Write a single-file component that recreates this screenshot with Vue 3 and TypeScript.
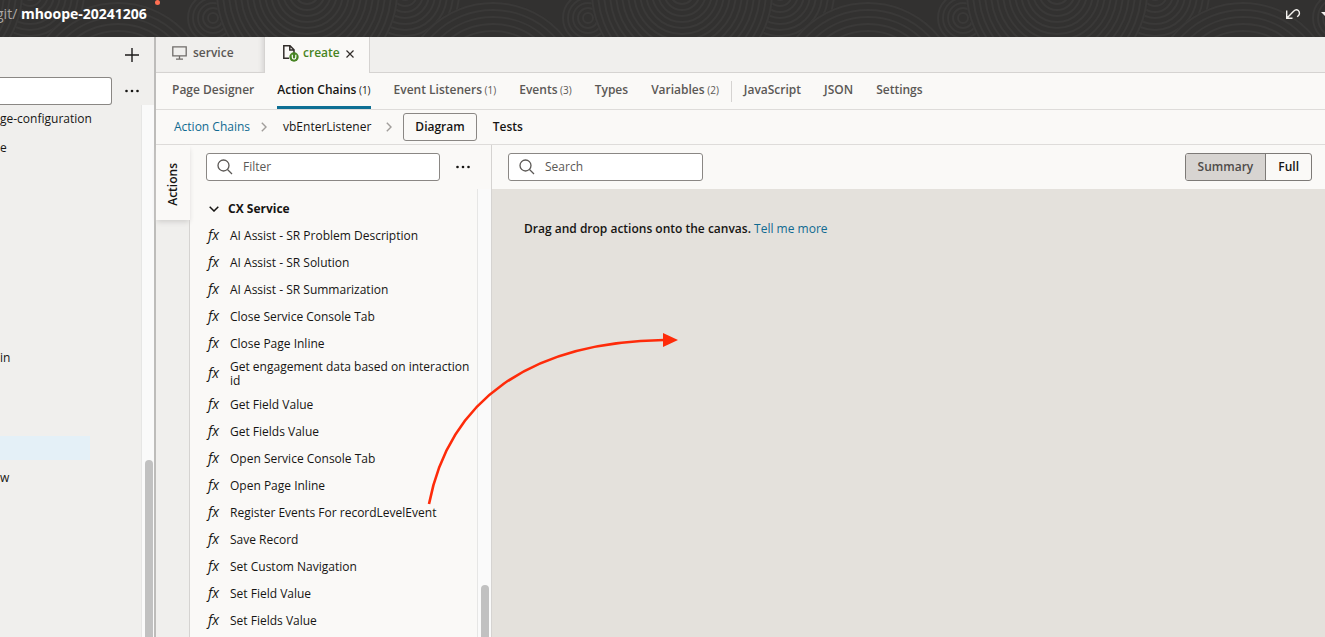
<script setup lang="ts">
import { ref } from 'vue'

interface SectionTab {
  label: string
  count?: number
}

const designTabs: SectionTab[] = [
  { label: 'Page Designer' },
  { label: 'Action Chains', count: 1 },
  { label: 'Event Listeners', count: 1 },
  { label: 'Events', count: 3 },
  { label: 'Types' },
  { label: 'Variables', count: 2 },
]
const sourceTabs: SectionTab[] = [{ label: 'JavaScript' }, { label: 'JSON' }, { label: 'Settings' }]
const activeTab = ref('Action Chains')

const actions: string[] = [
  'AI Assist - SR Problem Description',
  'AI Assist - SR Solution',
  'AI Assist - SR Summarization',
  'Close Service Console Tab',
  'Close Page Inline',
  'Get engagement data based on interaction id',
  'Get Field Value',
  'Get Fields Value',
  'Open Service Console Tab',
  'Open Page Inline',
  'Register Events For recordLevelEvent',
  'Save Record',
  'Set Custom Navigation',
  'Set Field Value',
  'Set Fields Value',
]

const treeRows: string[] = ['ge-configuration', 'e', '', '', '', '', '', '', 'in', '', '', '', 'w']
const selectedRow = 11

const filter = ref('')
const search = ref('')
const treeFilter = ref('')
const view = ref<'summary' | 'full'>('summary')

const rings = (count: number, step: number): number[] =>
  Array.from({ length: count }, (_, i) => (i + 1) * step)
const tiles: number[] = [-375, 0, 375, 750, 1125, 1500]
</script>

<template>
  <div class="app">
    <header class="topbar">
      <svg class="texture" aria-hidden="true">
        <g v-for="x in tiles" :key="x" :transform="`translate(${x} 0)`">
          <circle v-for="r in rings(9, 6)" :key="'a' + r" cx="405" cy="-6" :r="r" />
          <circle v-for="r in rings(5, 5)" :key="'b' + r" cx="213" cy="18" :r="r" />
          <circle class="mask" cx="118" cy="94" r="92" />
          <circle v-for="r in rings(13, 7)" :key="'c' + r" cx="118" cy="94" :r="r" />
          <circle class="mask" cx="307" cy="-8" r="91" />
          <circle v-for="r in rings(15, 6)" :key="'d' + r" cx="307" cy="-8" :r="r" />
        </g>
      </svg>
      <div class="branch"><span class="repo">git/</span> <strong>mhoope-20241206</strong></div>
      <i class="dot"></i>
      <div class="history">
        <button class="plain" aria-label="Undo">
          <svg width="16" height="12" viewBox="0 0 16 12" fill="none" stroke="#f3f1ee" stroke-width="1.4">
            <path d="M1.7 2.5v7.8h5.800M2 10l6.600-6.800c1.400-1.400 3.300-1.900 4.700-.6 1.600 1.500 1.500 3.900 0 5.200l-1.100 1" />
          </svg>
        </button>
        <button class="plain caret" aria-label="Undo history">
          <svg width="8" height="5" viewBox="0 0 8 5"><path d="M0 0h8L4 4z" fill="#f3f1ee" /></svg>
        </button>
      </div>
    </header>

    <div class="body">
      <aside class="navigator">
        <div class="nav-tools">
          <button class="plain" aria-label="Add">
            <svg width="14" height="14" viewBox="0 0 14 14" stroke="#1c1b1a" stroke-width="1.4"><path d="M7 0v14M0 7h14" /></svg>
          </button>
        </div>
        <div class="nav-filter">
          <input v-model="treeFilter" type="text" aria-label="Filter files" />
          <button class="plain" aria-label="More file options">
            <svg width="14" height="4" viewBox="0 0 14 4" fill="#161513"><circle cx="1.500" cy="2" r="1.300" /><circle cx="7" cy="2" r="1.300" /><circle cx="12.500" cy="2" r="1.300" /></svg>
          </button>
        </div>
        <div class="scroller">
          <ul class="tree">
            <li v-for="(row, i) in treeRows" :key="i"><span :class="{ selected: i === selectedRow }">{{ row }}</span></li>
          </ul>
          <div class="track nav-track"><div class="thumb nav-thumb"></div></div>
        </div>
      </aside>

      <main class="editor">
        <nav class="files" aria-label="Open files">
          <a class="file" href="#service">
            <svg width="15" height="14" viewBox="0 0 15 14" fill="none" stroke="#6f6c69" stroke-width="1.300"><path d="M.8.8h13.400v9H.8zM7.500 10v3M4 13.200h7" /></svg>
            service
          </a>
          <div class="file current">
            <svg width="17" height="18" viewBox="0 0 17 18">
              <path d="M7 14.300H1.800V1.800H8l4 4V9M7.800 1.800v4.300H12" fill="none" stroke="#312d2a" stroke-width="1.500" />
              <circle cx="12" cy="13" r="4.700" fill="#478423" />
              <path d="M10.300 10.800v2.500c0 2.500 3.500 2.500 3.500 0v-2.500" fill="none" stroke="#fff" stroke-width="1.200" />
            </svg>
            <a href="#create">create</a>
            <button class="plain" aria-label="Close create">
              <svg width="8" height="8" viewBox="0 0 8 8" stroke="#312d2a" stroke-width="1.200"><path d="M.5.500l7 7M7.500.500l-7 7" /></svg>
            </button>
          </div>
        </nav>

        <nav class="sections" aria-label="Page sections">
          <button v-for="tab in designTabs" :key="tab.label" :class="{ active: tab.label === activeTab }" @click="activeTab = tab.label">
            {{ tab.label }}<small v-if="tab.count"> ({{ tab.count }})</small>
          </button>
          <i class="divider"></i>
          <button v-for="tab in sourceTabs" :key="tab.label" :class="{ active: tab.label === activeTab }" @click="activeTab = tab.label">{{ tab.label }}</button>
        </nav>

        <div class="crumbs">
          <a href="#chains">Action Chains</a>
          <svg width="6" height="10" viewBox="0 0 6 10"><path d="M.8.8L5 5 .8 9.200" /></svg>
          <span class="chain">vbEnterListener</span>
          <svg width="6" height="10" viewBox="0 0 6 10"><path d="M.8.8L5 5 .8 9.200" /></svg>
          <button class="mode on">Diagram</button>
          <button class="mode">Tests</button>
        </div>

        <div class="workspace">
          <div class="rail"><button class="rail-tab"><span>Actions</span></button></div>

          <section class="palette">
            <div class="tools">
              <label class="field">
                <svg width="16" height="16" viewBox="0 0 16 16"><circle cx="6.500" cy="6.500" r="5.500" /><path d="M10.500 10.500l4.500 4.500" /></svg>
                <input v-model="filter" type="text" placeholder="Filter" aria-label="Filter actions" />
              </label>
              <button class="plain" aria-label="More action options">
                <svg width="14" height="4" viewBox="0 0 14 4" fill="#161513"><circle cx="1.500" cy="2" r="1.300" /><circle cx="7" cy="2" r="1.300" /><circle cx="12.500" cy="2" r="1.300" /></svg>
              </button>
            </div>
            <div class="scroller">
              <div class="group">
                <button class="group-title">
                  <svg width="10" height="6" viewBox="0 0 10 6" fill="none" stroke="#161513" stroke-width="1.500"><path d="M.7.700L5 5 9.300.700" /></svg>
                  CX Service
                </button>
                <ul>
                  <li v-for="action in actions" :key="action"><em>fx</em><span>{{ action }}</span></li>
                </ul>
              </div>
              <div class="track"><div class="thumb palette-thumb"></div></div>
            </div>
          </section>

          <section class="diagram">
            <div class="tools">
              <label class="field search">
                <svg width="16" height="16" viewBox="0 0 16 16"><circle cx="6.500" cy="6.500" r="5.500" /><path d="M10.500 10.500l4.500 4.500" /></svg>
                <input v-model="search" type="text" placeholder="Search" aria-label="Search diagram" />
              </label>
              <div class="toggle">
                <button :class="{ on: view === 'summary' }" @click="view = 'summary'">Summary</button>
                <button :class="{ on: view === 'full' }" @click="view = 'full'">Full</button>
              </div>
            </div>
            <div class="canvas">
              <strong>Drag and drop actions onto the canvas.</strong> <a href="#help">Tell me more</a>
            </div>
          </section>
        </div>
      </main>
    </div>

    <svg class="arrow" width="260" height="180" viewBox="0 0 260 180" aria-hidden="true">
      <path d="M9 174C29 70 110 12 244 10" fill="none" stroke="#fe2b0a" stroke-width="2.600" />
      <path d="M243 3l15 7-15 7z" fill="#fe2b0a" />
    </svg>
  </div>
</template>

<style>
body {
  margin: 0;
}
</style>

<style scoped>
* {
  box-sizing: border-box;
}
.app {
  position: relative;
  display: flex;
  flex-direction: column;
  height: 100vh;
  overflow: hidden;
  background: #faf9f7;
  color: #161513;
  font: 12px/16px 'Open Sans', 'Noto Sans', sans-serif;
}
button,
input {
  font: inherit;
  color: inherit;
}
button {
  padding: 0;
  border: 0;
  background: none;
}
a {
  color: #0f6a91;
  text-decoration: none;
}
ul {
  margin: 0;
  padding: 0;
  list-style: none;
}
.plain {
  display: flex;
}

.topbar {
  position: relative;
  display: flex;
  flex: none;
  height: 37px;
  align-items: flex-start;
  justify-content: space-between;
  background: #323130;
  color: #fff;
  overflow: hidden;
}
.texture {
  position: absolute;
  inset: 0;
  width: 100%;
  height: 100%;
  fill: none;
  stroke: #3a3938;
  stroke-width: 2;
}
.mask {
  fill: #323130;
  stroke: none;
}
.branch {
  position: relative;
  margin-top: 6px;
  font-size: 14px;
}
.repo {
  margin-left: -4px;
  color: #aaa7a4;
}
.dot {
  position: absolute;
  left: 155px;
  top: 0;
  width: 5px;
  height: 5px;
  border-radius: 50%;
  background: #ff6f52;
}
.history {
  position: relative;
  display: flex;
  margin: 8px -4px 0 0;
  gap: 20px;
}
.caret {
  padding-top: 4px;
}

.body {
  display: flex;
  flex: 1;
  min-height: 0;
}
.navigator {
  display: flex;
  flex-direction: column;
  flex: none;
  width: 156px;
  border-right: 2px solid #bdbcba;
  background: #f0efed;
}
.nav-tools {
  display: flex;
  justify-content: flex-end;
  padding: 11px 15px 15px;
}
.nav-filter {
  display: flex;
  align-items: center;
  justify-content: space-between;
  padding-right: 15px;
}
.nav-filter input {
  width: 112px;
  height: 28px;
  border: 1px solid #8a8784;
  border-left: 0;
  border-radius: 0 3px 3px 0;
  background: #fff;
}
.scroller {
  display: flex;
  flex: 1;
  min-height: 0;
  overflow: hidden;
}
.tree {
  flex: 1;
  min-width: 0;
}
.tree li {
  display: flex;
  align-items: center;
  height: 30px;
}
.tree li:first-child {
  height: 28px;
}
.tree .selected {
  width: 90px;
  height: 24px;
  background: #e4f0f7;
}
.track {
  flex: none;
  width: 14px;
  padding-left: 3px;
  border-left: 1px solid #e6e6e5;
  background: #fafafa;
}
.nav-track {
  width: 13px;
}
.thumb {
  width: 8px;
  height: 100%;
  border-radius: 4px 4px 0 0;
  background: #c1c1c1;
}
.nav-thumb {
  margin-top: 355px;
}
.palette-thumb {
  margin-top: 396px;
}

.editor {
  display: flex;
  flex-direction: column;
  flex: 1;
  min-width: 0;
}
.files {
  display: flex;
  flex: none;
  height: 36px;
  border-bottom: 1px solid #d5d3d1;
  background: #f0efed;
}
.file {
  display: flex;
  align-items: center;
  gap: 6px;
  width: 109px;
  padding: 0 16px 4px;
  border-right: 1px solid #d5d3d1;
  color: #5b5855;
  font-weight: 600;
  box-shadow: inset -5px 0 4px -3px #d8d7d5;
}
.current {
  width: 105px;
  height: 36px;
  gap: 4px;
  padding: 0 12px 4px 17px;
  background: #faf9f7;
  box-shadow: none;
}
.current a {
  color: #478423;
  font-weight: 600;
}
.current .plain {
  margin: 2px 0 0 2px;
}
.sections {
  display: flex;
  flex: none;
  align-items: center;
  gap: 23px;
  height: 37px;
  padding: 0 16px;
  border-bottom: 1px solid #dedcda;
}
.sections button {
  height: 36px;
  border-bottom: 3px solid transparent;
  color: #5b5855;
  font-weight: 600;
  white-space: nowrap;
}
.sections .active {
  border-color: #0d6f94;
  color: #161513;
}
.sections small {
  font-size: 10px;
  font-weight: 400;
}
.divider {
  width: 1px;
  height: 21px;
  margin: 0 -11px;
  background: #d5d3d1;
}
.crumbs {
  display: flex;
  flex: none;
  align-items: center;
  height: 35px;
  padding: 0 18px;
  border-bottom: 1px solid #dedcda;
}
.crumbs svg {
  margin: 0 11px;
  fill: none;
  stroke: #a19e9b;
  stroke-width: 1.4;
}
.chain {
  margin: 0 4px 0 5px;
}
.mode {
  height: 28px;
  padding: 0 11px;
  border: 1px solid transparent;
  border-radius: 3px;
  font-weight: 600;
}
.mode.on {
  margin-right: 4px;
  border-color: #8a8784;
}

.workspace {
  display: flex;
  flex: 1;
  min-height: 0;
}
.rail {
  flex: none;
  width: 34px;
  border-right: 1px solid #d5d3d1;
  background: #f0efed;
}
.rail-tab {
  width: 34px;
  height: 75px;
  padding-top: 8px;
  background: #faf9f7;
  font-weight: 600;
  box-shadow: 0 3px 5px -1px #d0cfcd;
}
.rail-tab span {
  display: inline-block;
  writing-mode: vertical-rl;
  transform: rotate(180deg);
}
.palette {
  display: flex;
  flex-direction: column;
  flex: none;
  width: 302px;
  border-right: 1px solid #d5d3d1;
}
.tools {
  display: flex;
  flex: none;
  align-items: center;
  justify-content: space-between;
  height: 44px;
  padding: 0 21px 0 16px;
}
.field {
  display: flex;
  align-items: center;
  gap: 10px;
  width: 234px;
  height: 28px;
  padding: 0 10px;
  border: 1px solid #8a8784;
  border-radius: 3px;
  background: #fff;
}
.field svg {
  flex: none;
  fill: none;
  stroke: #5b5855;
  stroke-width: 1.3;
}
.field input {
  flex: 1;
  min-width: 0;
  padding: 0;
  border: 0;
  outline: 0;
  background: none;
}
.field input::placeholder {
  color: #5b5855;
  opacity: 1;
}
.search {
  width: 195px;
}
.group {
  flex: 1;
  min-width: 0;
  padding: 6px 4px 0 16px;
}
.group-title {
  display: flex;
  align-items: center;
  gap: 9px;
  height: 27px;
  padding-left: 3px;
  font-weight: 700;
}
.group li {
  display: flex;
  align-items: center;
  min-height: 27px;
  padding: 3px 0;
  line-height: 14px;
}
.group em {
  flex: none;
  width: 24px;
  padding: 0 0 2px 2px;
  font-size: 14px;
  font-weight: 500;
}

.diagram {
  display: flex;
  flex-direction: column;
  flex: 1;
  min-width: 0;
}
.diagram .tools {
  padding-right: 13px;
}
.toggle {
  display: flex;
  height: 28px;
  border: 1px solid #7d7a77;
  border-radius: 3px;
  overflow: hidden;
}
.toggle button {
  padding: 0 12px;
  font-weight: 600;
}
.toggle button + button {
  border-left: 1px solid #7d7a77;
}
.toggle .on {
  background: #d7d4d1;
  color: #4f4c49;
}
.canvas {
  flex: 1;
  padding: 32px;
  background: #e4e1dc;
}
.canvas strong {
  font-weight: 600;
}
.arrow {
  position: absolute;
  left: 420px;
  top: 330px;
  pointer-events: none;
}
</style>
